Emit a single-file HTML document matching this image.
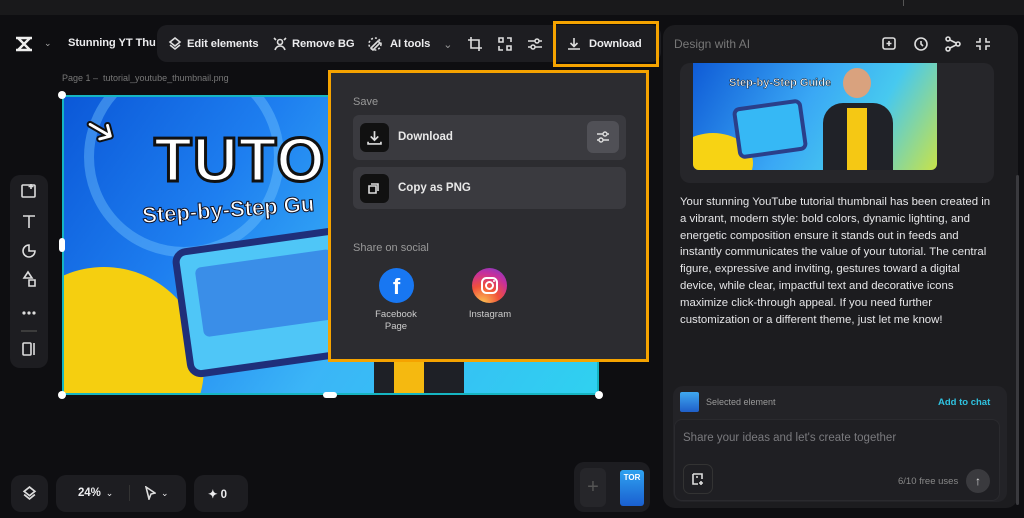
<!DOCTYPE html>
<html><head><meta charset="utf-8"><style>
*{box-sizing:border-box;margin:0;padding:0}
body{width:1024px;height:518px;background:#0e0e11;font-family:"Liberation Sans",sans-serif;color:#e8e8ea;position:relative;overflow:hidden}
.abs{position:absolute}
.top{left:0;top:0;width:1024px;height:15px;background:#19191b}
.pill{background:#1d1d21;border-radius:10px}
.tb{font-size:11.2px;font-weight:bold;color:#ececee;display:flex;align-items:center;gap:5px;letter-spacing:-0.1px}
.ico{stroke:#ddd;fill:none;stroke-width:1.6}
.txt{font-size:11.4px;line-height:16.8px;color:#e6e6e8}
</style></head><body>
<div class="abs top"></div>
<div class="abs" style="left:903px;top:0;width:1px;height:6px;background:#555"></div>

<svg class="abs" style="left:14px;top:36px" width="22" height="16" viewBox="0 0 22 16"><path d="M2 2h16M2 14h16M4 2l12 12M16 2L4 14" stroke="#eee" stroke-width="2.4" fill="none"/></svg>
<div class="abs" style="left:44px;top:38px;font-size:9px;color:#aaa">⌄</div>
<div class="abs tb" style="left:68px;top:37px">Stunning YT Thu</div>

<div class="abs pill" style="left:157px;top:25px;width:504px;height:37px"></div>
<div class="abs tb" style="left:168px;top:37px"><svg width="14" height="14" viewBox="0 0 14 14" class="ico"><path d="M7 1l5 4-5 4-5-4z M2 8l5 4 5-4"/></svg>Edit elements</div>
<div class="abs tb" style="left:273px;top:37px"><svg width="14" height="14" viewBox="0 0 14 14" class="ico"><circle cx="7" cy="5" r="2.5"/><path d="M2 13c1-3 3-4 5-4s4 1 5 4M1 1l2 2M13 1l-2 2"/></svg>Remove BG</div>
<div class="abs tb" style="left:368px;top:37px"><svg width="14" height="14" viewBox="0 0 14 14" class="ico"><path d="M3 11l7-7 2 2-7 7z" /><circle cx="7" cy="7" r="6" stroke-dasharray="2 2"/></svg>&nbsp;AI tools <span style="color:#999;font-weight:normal;margin-left:8px">⌄</span></div>
<svg class="abs" style="left:468px;top:37px" width="14" height="14" viewBox="0 0 14 14"><path class="ico" d="M3 0v11h11M0 3h11v11"/></svg>
<svg class="abs" style="left:498px;top:37px" width="14" height="14" viewBox="0 0 14 14"><path class="ico" d="M1 1h4v4H1zM9 9h4v4H9zM9 1h4v4M1 9v4h4"/></svg>
<svg class="abs" style="left:528px;top:37px" width="14" height="14" viewBox="0 0 14 14"><path class="ico" d="M0 4h14M0 10h14"/><circle cx="9" cy="4" r="2" fill="#1d1d21" stroke="#ddd" stroke-width="1.5"/><circle cx="5" cy="10" r="2" fill="#1d1d21" stroke="#ddd" stroke-width="1.5"/></svg>
<div class="abs" style="left:553px;top:21px;width:106px;height:46px;border:3px solid #f5a300"></div>
<div class="abs tb" style="left:567px;top:37px"><svg width="14" height="14" viewBox="0 0 14 14" class="ico"><path d="M7 1v8M3.5 6L7 9.5 10.5 6M1 12h12"/></svg>&nbsp;Download</div>

<div class="abs pill" style="left:663px;top:25px;width:355px;height:483px;border-radius:12px;background:#1c1c1f"></div>
<div class="abs" style="left:674px;top:37px;font-size:12px;color:#777">Design with AI</div>
<svg class="abs" style="left:882px;top:36px" width="110" height="16" viewBox="0 0 110 16"><g class="ico"><rect x="1" y="2" width="12" height="11" rx="2"/><path d="M7 5v5M4.5 7.5h5"/><circle cx="39" cy="8" r="6"/><path d="M39 5v3l2 2"/><circle cx="66" cy="3" r="2"/><circle cx="66" cy="13" r="2"/><circle cx="76" cy="8" r="2"/><path d="M68 4l6 3M68 12l6-3"/><path d="M98 2v4h-4M104 2v4h4M98 14v-4h-4M104 14v-4h4"/></g></svg>
<div class="abs" style="left:680px;top:63px;width:314px;height:120px;background:#26262a;border-radius:10px"></div>
<div class="abs" style="left:693px;top:63px;width:244px;height:107px;border-radius:0 0 6px 6px;background:linear-gradient(120deg,#0f5bd6 0%,#3aa8f5 45%,#47c9ef 70%,#c7e24a 100%);overflow:hidden">
 <div class="abs" style="left:-20px;top:70px;width:80px;height:60px;background:#f7d314;border-radius:50%"></div>
 <div class="abs" style="left:36px;top:14px;font-size:11px;font-weight:bold;color:#fff;-webkit-text-stroke:0.5px #123">Step-by-Step Guide</div>
 <div class="abs" style="left:42px;top:40px;width:70px;height:52px;border:4px solid #2a3f8a;border-radius:7px;background:#36b8f5;transform:rotate(-8deg)"></div>
 <div class="abs" style="left:150px;top:5px;width:28px;height:30px;background:#d9a27e;border-radius:50%"></div>
 <div class="abs" style="left:130px;top:40px;width:70px;height:70px;background:#202228;border-radius:20px 20px 0 0"></div>
 <div class="abs" style="left:154px;top:45px;width:20px;height:65px;background:#f5c814"></div>
</div>
<div class="abs txt" style="left:680px;top:194px;width:314px">Your stunning YouTube tutorial thumbnail has been created in a vibrant, modern style: bold colors, dynamic lighting, and energetic composition ensure it stands out in feeds and instantly communicates the value of your tutorial. The central figure, expressive and inviting, gestures toward a digital device, while clear, impactful text and decorative icons maximize click-through appeal. If you need further customization or a different theme, just let me know!</div>
<div class="abs" style="left:1016px;top:175px;width:3px;height:330px;background:#3a3a3e;border-radius:2px"></div>
<div class="abs" style="left:673px;top:386px;width:334px;height:116px;background:#232327;border-radius:10px"></div>
<div class="abs" style="left:680px;top:392px;width:19px;height:20px;background:linear-gradient(#3fa8f0,#1f5fc9);border-radius:2px"></div>
<div class="abs" style="left:706px;top:397px;font-size:9px;color:#999">Selected element</div>
<div class="abs" style="left:938px;top:397px;font-size:9.5px;color:#2fc2e0;font-weight:bold">Add to chat</div>
<div class="abs" style="left:674px;top:419px;width:326px;height:82px;background:#1f1f23;border-radius:8px;border:1px solid #2a2a2e"></div>
<div class="abs" style="left:683px;top:432px;font-size:11.5px;color:#7a7a7e">Share your ideas and let's create together</div>
<div class="abs" style="left:683px;top:464px;width:30px;height:30px;border:1px solid #333;border-radius:7px"></div>
<svg class="abs" style="left:691px;top:472px" width="14" height="14" viewBox="0 0 14 14"><path class="ico" stroke="#888" d="M2 2h9v5M2 2v10h5M5 5h2M10 9v4M8 11h4"/></svg>
<div class="abs" style="left:898px;top:476px;font-size:9.5px;color:#888">6/10 free uses</div>
<div class="abs" style="left:966px;top:469px;width:24px;height:24px;border-radius:50%;background:#3a3a3e;color:#ddd;font-size:12px;text-align:center;line-height:24px">↑</div>

<div class="abs" style="left:62px;top:73px;font-size:9px;color:#777">Page 1 –&nbsp; tutorial_youtube_thumbnail.png</div>
<div class="abs" style="left:62px;top:95px;width:537px;height:300px;border:2px solid #16b5c2;overflow:hidden;background:linear-gradient(125deg,#0b58d8 0%,#1e7ff0 30%,#3bb5f7 60%,#2fd1f0 100%)">
 <div class="abs" style="left:-60px;top:170px;width:200px;height:200px;background:#f5cf10;border-radius:50%"></div>
 <div class="abs" style="left:20px;top:-40px;width:200px;height:200px;border:10px solid rgba(120,200,255,.4);border-radius:50%"></div>
 <div class="abs" style="left:90px;top:28px;font-size:62px;font-weight:900;color:#fff;-webkit-text-stroke:3px #111;letter-spacing:1px">TUTO</div>
 <div class="abs" style="left:78px;top:100px;font-size:22px;font-weight:900;color:#fff;-webkit-text-stroke:1px #112;transform:rotate(-4deg)">Step-by-Step Gu</div>
 <div class="abs" style="left:115px;top:140px;width:180px;height:130px;border:7px solid #1f2f7a;border-radius:14px;background:#4fc6f7;transform:rotate(-8deg)"><div style="margin:14px;height:70px;background:#3a8ee8;border-radius:6px"></div></div>
 <div class="abs" style="left:310px;top:240px;width:90px;height:70px;background:#1e2026;border-radius:20px 20px 0 0"></div>
 <div class="abs" style="left:330px;top:250px;width:30px;height:60px;background:#f5b910"></div>
 <div class="abs" style="left:20px;top:10px;font-size:40px;color:#fff;-webkit-text-stroke:2px #111;transform:rotate(30deg)">➜</div>
</div>
<div class="abs" style="left:58px;top:91px;width:8px;height:8px;border-radius:50%;background:#fff"></div>
<div class="abs" style="left:58px;top:391px;width:8px;height:8px;border-radius:50%;background:#fff"></div>
<div class="abs" style="left:595px;top:391px;width:8px;height:8px;border-radius:50%;background:#fff"></div>
<div class="abs" style="left:323px;top:392px;width:14px;height:6px;border-radius:3px;background:#fff"></div>
<div class="abs" style="left:59px;top:238px;width:6px;height:14px;border-radius:3px;background:#fff"></div>

<div class="abs pill" style="left:10px;top:175px;width:38px;height:193px"></div>
<svg class="abs" style="left:20px;top:183px" width="18" height="178" viewBox="0 0 18 178"><g class="ico"><rect x="2" y="2" width="13" height="12" rx="1"/><path d="M11 1v5M8.5 3.5h5"/><path d="M3 33h12M9 33v12"/><path d="M9 62a6 6 0 1 0 6 6h-6z"/><path d="M4 95l4-6 4 6zM9 97h6v6h-6z"/><circle cx="4" cy="130" r="0.8"/><circle cx="9" cy="130" r="0.8"/><circle cx="14" cy="130" r="0.8"/><path d="M1 148h16" stroke="#444"/><rect x="3" y="160" width="8" height="12" rx="1"/><path d="M14 160v12"/></g></svg>

<div class="abs pill" style="left:11px;top:475px;width:37px;height:37px"></div>
<svg class="abs" style="left:22px;top:486px" width="15" height="15" viewBox="0 0 14 14"><path class="ico" d="M7 1l5 4-5 4-5-4z M2 8l5 4 5-4"/></svg>
<div class="abs pill" style="left:56px;top:475px;width:130px;height:37px"></div>
<div class="abs tb" style="left:78px;top:487px;font-size:11.5px">24% <span style="font-weight:normal;font-size:9px">⌄</span></div>
<div class="abs" style="left:129px;top:485px;width:1px;height:16px;background:#333"></div>
<div class="abs tb" style="left:144px;top:486px"><svg width="12" height="14" viewBox="0 0 12 14"><path class="ico" d="M2 1l9 6-4 1-2 5z"/></svg><span style="font-size:9px;font-weight:normal">⌄</span></div>
<div class="abs pill" style="left:194px;top:475px;width:54px;height:37px"></div>
<div class="abs tb" style="left:208px;top:487px;font-size:11.5px">✦ 0</div>
<div class="abs pill" style="left:574px;top:462px;width:76px;height:50px"></div>
<div class="abs" style="left:580px;top:468px;width:26px;height:39px;border-radius:6px;background:#26262a;color:#555;font-size:20px;text-align:center;line-height:38px">+</div>
<div class="abs" style="left:620px;top:470px;width:24px;height:36px;border-radius:3px;background:linear-gradient(#2fa2f0,#1a5fd0);font-size:8px;font-weight:bold;color:#fff;text-align:center;padding-top:3px">TOR</div>

<div class="abs" style="left:328px;top:70px;width:321px;height:292px;background:#2c2c30;border:3px solid #f5a300"></div>
<div class="abs" style="left:353px;top:96px;font-size:11px;color:#999">Save</div>
<div class="abs" style="left:353px;top:115px;width:273px;height:45px;background:#3a3a3f;border-radius:6px"></div>
<div class="abs" style="left:360px;top:123px;width:29px;height:29px;background:#111;border-radius:6px"></div>
<svg class="abs" style="left:367px;top:130px" width="15" height="15" viewBox="0 0 14 14"><path class="ico" d="M7 1v8M3.5 6L7 9.5 10.5 6M1 11v2h12v-2"/></svg>
<div class="abs" style="left:398px;top:131px;font-size:11.5px;font-weight:bold;color:#e8e8e8">Download</div>
<div class="abs" style="left:587px;top:121px;width:32px;height:32px;background:#505056;border-radius:6px"></div>
<svg class="abs" style="left:596px;top:130px" width="14" height="14" viewBox="0 0 14 14"><path class="ico" d="M1 4h12M1 10h12"/><circle cx="9" cy="4" r="2" fill="#505056" stroke="#ddd" stroke-width="1.4"/><circle cx="5" cy="10" r="2" fill="#505056" stroke="#ddd" stroke-width="1.4"/></svg>
<div class="abs" style="left:353px;top:167px;width:273px;height:42px;background:#3a3a3f;border-radius:6px"></div>
<div class="abs" style="left:360px;top:174px;width:29px;height:29px;background:#111;border-radius:6px"></div>
<svg class="abs" style="left:367px;top:181px" width="14" height="14" viewBox="0 0 14 14"><path class="ico" d="M4 3h7v7M2 5h7v7H2z"/></svg>
<div class="abs" style="left:398px;top:182px;font-size:11.5px;font-weight:bold;color:#e8e8e8">Copy as PNG</div>
<div class="abs" style="left:353px;top:242px;font-size:11px;color:#999">Share on social</div>
<div class="abs" style="left:379px;top:268px;width:35px;height:35px;border-radius:50%;background:#1877f2;color:#fff;font-weight:bold;font-size:22px;text-align:center;line-height:37px">f</div>
<div class="abs" style="left:360px;top:309px;width:72px;text-align:center;font-size:9.5px;color:#ccc;line-height:12px">Facebook<br>Page</div>
<div class="abs" style="left:472px;top:268px;width:35px;height:35px;border-radius:50%;background:radial-gradient(circle at 30% 100%,#fdc252 0%,#f0513a 40%,#c72f9c 70%,#6b3fd4 100%)"></div>
<svg class="abs" style="left:479px;top:275px" width="21" height="21" viewBox="0 0 21 21"><rect x="3" y="3" width="15" height="15" rx="4.5" stroke="#fff" stroke-width="2" fill="none"/><circle cx="10.5" cy="10.5" r="3.5" stroke="#fff" stroke-width="2" fill="none"/><circle cx="15" cy="6" r="1" fill="#fff"/></svg>
<div class="abs" style="left:454px;top:309px;width:72px;text-align:center;font-size:9.5px;color:#ccc">Instagram</div>
</body></html>
